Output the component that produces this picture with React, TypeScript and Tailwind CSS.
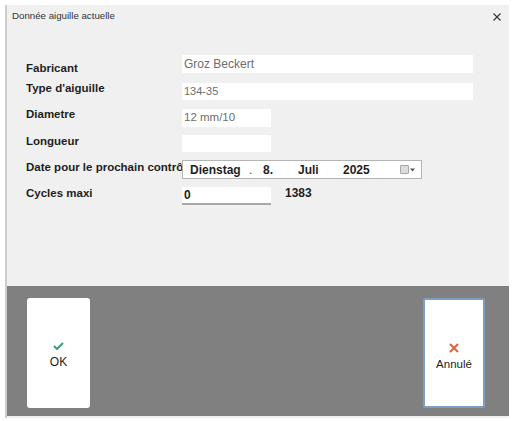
import React from "react";

const Label = ({ children, mt }: { children: React.ReactNode; mt: string }) => (
  <div
    className={`w-[156px] shrink-0 overflow-hidden whitespace-nowrap text-[11.5px] font-bold leading-[14px] text-[#1e1e1e] ${mt}`}
  >
    {children}
  </div>
);

export default function App() {
  return (
    <div className="w-[512px] h-[421px] bg-white pt-[5px] pl-[5px] font-['Liberation_Sans',Arial,sans-serif]">
      <div className="w-[504px] h-[413px] bg-[#f0f0f0] border-l-2 border-[#cdcdcd] flex flex-col">
        {/* title bar */}
        <div className="h-[22px] shrink-0 flex items-center justify-between pl-[5px] pr-[8px]">
          <span className="text-[9.7px] text-[#333]">Donnée aiguille actuelle</span>
          <svg width="8" height="8" viewBox="0 0 8 8" className="mt-[2px]">
            <path d="M0.5 0.5 L7.5 7.5 M7.5 0.5 L0.5 7.5" stroke="#333" strokeWidth="1.1" />
          </svg>
        </div>

        {/* form */}
        <div className="flex flex-col pt-[28px] pl-[19px]">
          <div className="flex items-start h-[28px]">
            <Label mt="mt-[6px]">Fabricant</Label>
            <div className="w-[291px] h-[18px] bg-white pl-[2px] flex items-center text-[12px] text-[#6e6e6e]">
              Groz Beckert
            </div>
          </div>
          <div className="flex items-start h-[26px]">
            <Label mt="mt-[-2px]">Type d'aiguille</Label>
            <div className="w-[291px] h-[17px] bg-white pl-[2px] flex items-center text-[11px] text-[#6e6e6e]">
              134-35
            </div>
          </div>
          <div className="flex items-start h-[26px]">
            <Label mt="mt-[-2px]">Diametre</Label>
            <div className="w-[89px] h-[18px] bg-white pl-[2px] flex items-center text-[11.5px] text-[#6e6e6e]">
              12 mm/10
            </div>
          </div>
          <div className="flex items-start h-[25px]">
            <Label mt="mt-[-1px]">Longueur</Label>
            <div className="w-[89px] h-[17px] bg-white" />
          </div>
          <div className="flex items-start h-[27px]">
            <Label mt="mt-[0px]">Date pour le prochain contrôle</Label>
            <div className="w-[240px] h-[19px] bg-white border border-[#b4b4b4] flex items-center text-[12px] text-[#1e1e1e]">
              <span className="ml-[7px] w-[59px] font-bold">Dienstag</span>
              <span className="w-[14px] text-[#555]">.</span>
              <span className="w-[35px] font-bold">8.</span>
              <span className="w-[45px] font-bold">Juli</span>
              <span className="flex-1 font-bold">2025</span>
              <span className="mr-[6px] flex items-center gap-[1px]">
                <span className="w-[9px] h-[9px] bg-[#dcdcdc] border border-[#a8a8a8] rounded-[1px]" />
                <svg width="5" height="4" viewBox="0 0 5 4">
                  <path d="M0 0.5 L5 0.5 L2.5 3.5 Z" fill="#555" />
                </svg>
              </span>
            </div>
          </div>
          <div className="flex items-start h-[18px]">
            <Label mt="mt-[-1px]">Cycles maxi</Label>
            <div className="w-[89px] h-[18px] bg-white border-b-2 border-[#a8a8a8] pl-[2px] flex items-center text-[12px] font-bold text-[#1e1e1e]">
              0
            </div>
            <span className="ml-[14px] mt-[-1px] text-[12px] font-bold leading-[14px] text-[#1e1e1e]">1383</span>
          </div>
        </div>

        <div className="flex-1" />

        {/* button panel */}
        <div className="h-[130px] mb-[2px] shrink-0 bg-[#808080] flex items-start justify-between pl-[20px] pr-[24px] pt-[12px]">
          <div className="w-[63px] h-[110px] bg-white rounded-[3px] flex flex-col items-center justify-center pt-[4px] gap-[6px]">
            <svg width="11" height="8" viewBox="0 0 11 8">
              <path d="M1 4 L4 7 L10 1" fill="none" stroke="#3b9e7c" strokeWidth="2" />
            </svg>
            <span className="text-[12px] leading-[12px] text-[#1e1e1e]">OK</span>
          </div>
          <div className="w-[62px] h-[110px] bg-white rounded-[2px] border-2 border-[#7d9ec2] flex flex-col items-center justify-center pt-[6px] gap-[5px]">
            <svg width="10" height="10" viewBox="0 0 10 10">
              <path d="M1 1 L9 9 M9 1 L1 9" stroke="#e0603f" strokeWidth="2" />
            </svg>
            <span className="text-[11.5px] leading-[12px] text-[#1e1e1e]">Annulé</span>
          </div>
        </div>
      </div>
    </div>
  );
}
